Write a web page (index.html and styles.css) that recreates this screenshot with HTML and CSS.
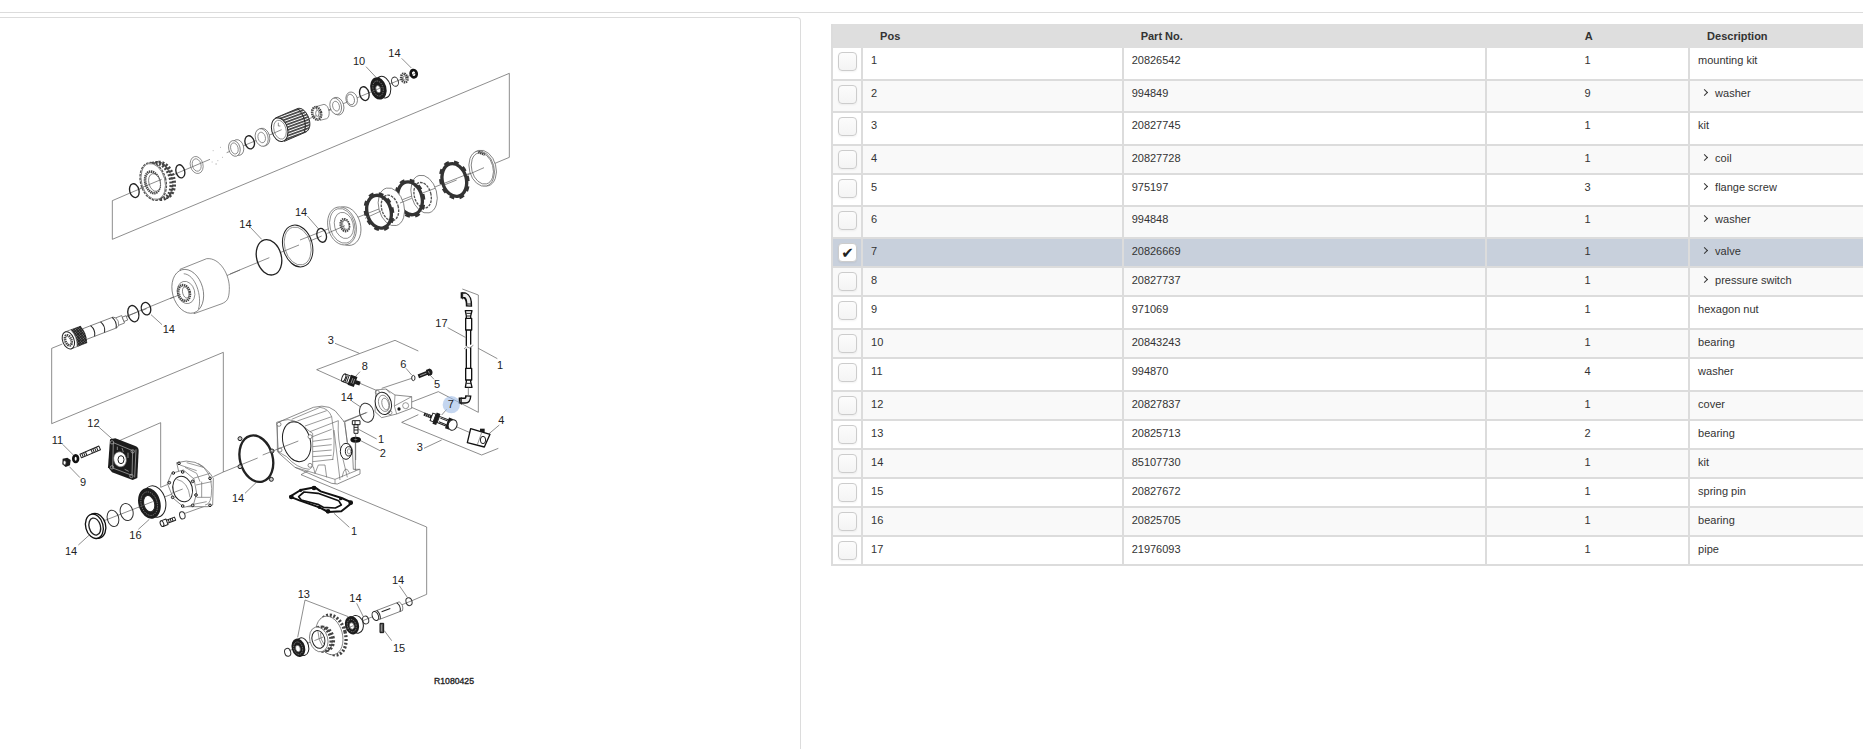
FILE: index.html
```
<!DOCTYPE html>
<html lang="en">
  <head>
    <meta charset="utf-8">
    <title>R1080425</title>
    <link rel="stylesheet" href="styles.css">
  </head>
  <body>
    <div class="topbar"></div>
    <div class="content">
      <div class="drawing">
        <svg class="diagram" viewBox="0 54 1680 2100" role="img" aria-label="Exploded view">
          <defs>
            <pattern id="spline" width="20" height="8" patternUnits="userSpaceOnUse" patternTransform="rotate(-20)">
              <rect width="20" height="8" fill="#fff"/>
              <rect width="20" height="5" fill="#444"/>
            </pattern>
            <pattern id="knurl" width="6" height="6" patternUnits="userSpaceOnUse" patternTransform="rotate(-20)">
              <rect width="6" height="6" fill="#222"/>
              <rect width="3" height="2" fill="#aaa"/>
            </pattern>
          </defs>

          <!-- upper shaft, left half -->
          <g transform="translate(300 90)">
            <path class="line" d="M88 490 37 512V628L1228 130V382L1185 400M88 490 330 388M380 368 720 228"/>
            <ellipse class="ring" cx="103" cy="482" rx="14" ry="21" transform="rotate(-15 103 482)"/>
            <g transform="rotate(-15 165 455)">
              <ellipse class="teeth" cx="187" cy="456" rx="34" ry="53"/>
              <ellipse class="teeth" cx="177" cy="456" rx="36" ry="55"/>
              <ellipse class="rim" cx="160" cy="453" rx="38" ry="58"/>
              <ellipse class="part" cx="160" cy="453" rx="35" ry="55" stroke="none"/>
              <ellipse class="bore" cx="157" cy="455" rx="21" ry="33"/>
              <ellipse class="part" cx="163" cy="457" rx="17" ry="27"/>
            </g>
            <path class="line" d="M120 475 185 448"/>
            <ellipse class="ring" cx="241" cy="424" rx="13" ry="20" transform="rotate(-15 241 424)"/>
            <g transform="rotate(-15 290 405)">
              <ellipse class="thin" cx="290" cy="405" rx="19" ry="26"/>
              <ellipse class="thin" cx="290" cy="405" rx="13" ry="19"/>
            </g>
            <path class="speck" d="M338 362h3M360 352h3M366 382h3M346 402h5M352 392h3M335 396h3"/>
            <g transform="rotate(-15 408 354)">
              <ellipse class="part" cx="414" cy="354" rx="17" ry="24"/>
              <ellipse class="part" cx="403" cy="354" rx="17" ry="24"/>
              <ellipse class="thin" cx="403" cy="354" rx="11" ry="17"/>
            </g>
            <ellipse class="ring" cx="449" cy="337" rx="14" ry="20" transform="rotate(-15 449 337)"/>
            <g transform="rotate(-15 487 322)">
              <ellipse class="part" cx="490" cy="322" rx="19" ry="27"/>
              <ellipse class="part" cx="485" cy="322" rx="19" ry="27"/>
              <ellipse class="thin" cx="485" cy="322" rx="11" ry="16"/>
            </g>
            <path class="splined" d="M526 264 592 236C618 226 646 290 618 306L553 334Z"/>
            <path class="dark" d="M592 236C612 250 622 286 612 308"/>
            <ellipse class="part dark" cx="539" cy="299" rx="24" ry="36" transform="rotate(-15 539 299)"/>
            <ellipse class="thin" cx="540" cy="299" rx="18" ry="29" transform="rotate(-15 540 299)"/>
            <path class="line" d="M515 312 545 299M535 278v10h6"/>
            <path class="part" d="M648 230 672 223C690 226 692 262 680 266L660 271Z"/>
            <ellipse class="bore" cx="650" cy="250" rx="13" ry="19" transform="rotate(-15 650 250)"/>
            <ellipse class="part" cx="652" cy="250" rx="5" ry="9"/>
          </g>

          <!-- upper shaft, right half -->
          <g transform="translate(930 90)">
            <path class="line" d="M55 240 320 128M-30 630 555 400M168 110 198 142M275 85 304 114"/>
            <g transform="rotate(-15 80 228)">
              <ellipse class="part" cx="82" cy="229" rx="19" ry="27"/>
              <ellipse class="part" cx="77" cy="228" rx="17" ry="25"/>
              <ellipse class="thin" cx="78" cy="228" rx="10" ry="15"/>
            </g>
            <g transform="rotate(-15 124 208)">
              <ellipse class="part" cx="125" cy="208" rx="17" ry="22"/>
              <ellipse class="part" cx="122" cy="208" rx="11" ry="16"/>
            </g>
            <ellipse class="ring" cx="163" cy="191" rx="14" ry="21" transform="rotate(-15 163 191)"/>
            <g transform="rotate(-15 210 174)">
              <ellipse class="part dark" cx="220" cy="174" rx="22" ry="33"/>
              <ellipse class="solid" cx="205" cy="174" rx="24" ry="34"/>
              <ellipse class="race" cx="204" cy="174" rx="15" ry="23"/>
              <ellipse class="part" cx="204" cy="176" rx="7" ry="11"/>
            </g>
            <path class="line" d="M183 186 216 172"/>
            <ellipse class="ring fine" cx="255" cy="155" rx="10" ry="14" transform="rotate(-15 255 155)"/>
            <ellipse class="bore" cx="283" cy="144" rx="9" ry="13" transform="rotate(-15 283 144)"/>
            <ellipse class="part" cx="283" cy="144" rx="4" ry="6"/>
            <ellipse class="seal" cx="311" cy="131" rx="9" ry="11" transform="rotate(-15 311 131)"/>

            <g transform="rotate(-15 518 415)">
              <ellipse class="part" cx="520" cy="415" rx="38" ry="55"/>
              <ellipse class="part" cx="515" cy="415" rx="37" ry="54"/>
              <ellipse class="part" cx="517" cy="415" rx="32" ry="48"/>
            </g>
            <path class="bore" d="M505 366 524 374"/>
            <g transform="rotate(-15 433 450)">
              <ellipse class="lugs" cx="433" cy="450" rx="39" ry="54"/>
              <ellipse class="clutch" cx="433" cy="450" rx="36" ry="50"/>
            </g>
            <g transform="rotate(-15 340 492)">
              <ellipse class="part" cx="342" cy="493" rx="38" ry="58"/>
              <ellipse class="rim" cx="337" cy="495" rx="25" ry="39"/>
            </g>
            <g transform="rotate(-15 300 505)">
              <ellipse class="lugs" cx="300" cy="505" rx="39" ry="54"/>
              <ellipse class="clutch" cx="300" cy="505" rx="36" ry="50"/>
            </g>
            <g transform="rotate(-15 242 530)">
              <ellipse class="part" cx="244" cy="531" rx="38" ry="58"/>
              <ellipse class="rim" cx="239" cy="533" rx="25" ry="39"/>
            </g>
            <g transform="rotate(-15 207 545)">
              <ellipse class="lugs" cx="207" cy="545" rx="39" ry="54"/>
              <ellipse class="clutch" cx="207" cy="545" rx="36" ry="50"/>
            </g>
            <path class="line" d="M165 565 213 543M270 519 305 505M335 490 375 475M400 466 440 450M470 436 522 413"/>
            <g transform="rotate(-15 103 587)">
              <ellipse class="part" cx="109" cy="590" rx="42" ry="59"/>
              <ellipse class="part" cx="96" cy="586" rx="42" ry="58"/>
              <ellipse class="thin" cx="97" cy="586" rx="37" ry="53"/>
              <ellipse class="thin" cx="102" cy="586" rx="28" ry="40"/>
              <ellipse class="bore" cx="105" cy="586" rx="12" ry="18"/>
              <ellipse class="part" cx="108" cy="586" rx="9" ry="14"/>
            </g>
            <path class="line" d="M52 610 105 587"/>
          </g>

          <!-- seal rings -->
          <g transform="translate(690 540)">
            <path class="line" d="M0 282 118 233M150 218 207 195M240 183 275 168M62 143 95 178M232 108 266 147"/>
            <ellipse class="ring" cx="275" cy="166" rx="14" ry="21" transform="rotate(-15 275 166)"/>
            <g transform="rotate(-15 203 198)">
              <ellipse class="thin dark" cx="203" cy="198" rx="44" ry="64"/>
              <ellipse class="thin" cx="203" cy="198" rx="39" ry="58"/>
            </g>
            <ellipse class="ring" cx="117" cy="232" rx="37" ry="54" transform="rotate(-15 117 232)"/>
          </g>

          <!-- drum and input shaft -->
          <g transform="translate(90 600)">
            <path class="line" d="M97 432 65 445V671L580 457V816M275 355 445 285M590 227 630 210M363 344 396 374"/>
            <path class="part" d="M450 208 530 176C570 172 600 225 598 268 597 300 590 304 576 311L492 341Z"/>
            <g transform="rotate(-15 473 273)">
              <ellipse class="part" cx="473" cy="274" rx="46" ry="67"/>
              <path class="thin" d="M475 220C508 230 512 300 490 334"/>
              <ellipse class="thin" cx="467" cy="276" rx="26" ry="34"/>
              <ellipse class="bore" cx="461" cy="276" rx="17" ry="24"/>
              <ellipse class="part" cx="466" cy="276" rx="9" ry="17"/>
            </g>
            <path class="line" d="M420 296 452 283"/>
            <ellipse class="ring" cx="348" cy="326" rx="14" ry="19" transform="rotate(-15 348 326)"/>
            <ellipse class="ring" cx="310" cy="341" rx="16" ry="25" transform="rotate(-15 310 341)"/>
            <path class="line" d="M275 355 320 337M335 332 350 326"/>
            <g transform="translate(115 421) rotate(-21)">
              <path class="part" d="M50-17H150L157-12H176V12H157L150 17H50Z"/>
              <path class="part" d="M176-7H188V7H176Z"/>
              <path class="dark" d="M78-17Q88 0 78 17M110-17Q120 0 110 17M147-17Q157 0 147 17"/>
              <path class="thin" d="M157-12Q164 0 157 12"/>
              <path class="knurled" d="M18-28H50Q60 0 50 28H18Z"/>
              <path class="part" d="M0-27H18Q30 0 18 27H0Z"/>
              <ellipse class="part dark" cx="0" cy="0" rx="17" ry="27"/>
              <ellipse class="bore" cx="0" cy="0" rx="9" ry="16"/>
            </g>
          </g>

          <!-- valve, switch and pipe -->
          <g transform="translate(900 840)">
            <path class="line" d="M130 305 50 269 285 181 355 213M105 190 178 220M180 310 320 370M245 325 335 295M335 366 415 335 535 397V45L487 27M535 205 592 236M443 143 496 172M180 275 166 290M318 265 335 285M402 298 390 285M155 363 182 381M330 380 510 458M355 404 305 427 545 525 595 505M372 505 425 480M598 435 566 462M440 388 425 405"/>
            <g transform="translate(150 300) rotate(20)">
              <path class="part dark" d="M-20-12H0V12H-20Z"/>
              <ellipse class="part dark" cx="-20" cy="0" rx="5" ry="12"/>
              <path class="solid" d="M-2-16H18V16H-2ZM18-6H32V6H18Z"/>
              <path class="shine" d="M6-8V8M12-8V8"/>
              <path class="dark" d="M-12-10V10M-7-10V10"/>
            </g>
            <ellipse class="ring fine" cx="340" cy="294" rx="5" ry="8"/>
            <g transform="translate(355 289) rotate(-21)">
              <path class="solid" d="M0-6H28V6H0ZM28-10H40Q50 0 40 10H28Z"/>
              <path class="shine" d="M6 0H26M34-4V4"/>
            </g>
            <ellipse class="ring fine" cx="200" cy="398" rx="21" ry="29" transform="rotate(-15 200 398)"/>
            <path class="line" d="M135 425 202 397"/>
            <g>
              <path class="part" d="M228 330 258 327 285 345 335 350V385L290 402 245 413 225 395Z"/>
              <path class="thin" d="M285 345 283 378 290 402M283 378 335 350M258 327 270 340"/>
              <ellipse class="part dark" cx="250" cy="370" rx="24" ry="34" transform="rotate(-15 250 370)"/>
              <ellipse class="thin" cx="252" cy="370" rx="16" ry="25" transform="rotate(-15 252 370)"/>
              <ellipse class="thin" cx="256" cy="372" rx="10" ry="18" transform="rotate(-15 256 372)"/>
              <circle class="thin" cx="232" cy="337" r="6"/>
              <circle class="thin" cx="270" cy="398" r="6"/>
              <circle class="solid" cx="297" cy="387" r="5"/>
              <circle class="thin" cx="317" cy="377" r="9"/>
            </g>
            <g transform="translate(372 402) rotate(21)">
              <path class="solid" d="M0-5H26V5H0Z"/>
              <path class="shine" d="M6-4V4M12-4V4M18-4V4"/>
              <path class="part dark" d="M24-12H34V12H24Z"/>
              <path class="solid" d="M34-18H46V18H34Z"/>
              <path class="part dark" d="M46-10H76V10H46Z"/>
              <path class="dark" d="M50-6H74M50 6H74"/>
              <path class="solid" d="M74-17H88V17H74Z"/>
              <ellipse class="part dark" cx="92" cy="0" rx="13" ry="16"/>
            </g>
            <path class="part outline" d="M512 446 570 463 553 501 502 488Z"/>
            <path class="thin" d="M545 458 532 494"/>
            <ellipse class="thin dark" cx="549" cy="480" rx="8" ry="11"/>
            <path class="solid" d="M540 446H554V456H540Z"/>
            <path class="elbow" d="M482 46H494Q508 52 507 80"/>
            <path class="elbow-core" d="M488 46H496Q508 52 507 76"/>
            <path class="elbow" d="M476 362H496Q504 362 505 346"/>
            <path class="elbow-core" d="M482 362H496Q504 362 505 350"/>
            <path class="dark" d="M488 36V58M498 72H516M484 352V374"/>
            <path class="part outline" d="M496 92H516L512 108V305L516 322H496L499 305V108Z"/>
            <path class="part outline" d="M497 115H515V150H497ZM497 265H515V300H497Z"/>
            <path class="dark" d="M499 108H512M499 100H514M499 310H513"/>
            <path class="gap" d="M490 205 522 195"/>
            <path class="line" d="M492 207 500 200 508 204 520 196M505 322V345"/>
            <path class="part dark" d="M157 422H180V434H157ZM162 434H174V460H162Z"/>
            <path class="dark" d="M162 442H174M162 450H174M165 423V434"/>
            <ellipse class="seal" cx="167" cy="479" rx="12" ry="5"/>
            <path class="line" d="M174 447 230 477M182 482 240 512M167 460V540"/>
            <circle class="spot" cx="454" cy="374" r="26"/>
          </g>

          <!-- cover, bearing and flange -->
          <g transform="translate(90 1230)">
            <path class="line" d="M243 103 392 38V232L425 218M205 50 250 90M98 103 130 135M118 170 150 203M580 186 550 200M580 186 683 144M325 358 358 328M145 405 178 375M645 250 678 218M215 335 475 233M465 310 540 283"/>
            <path class="solid" d="M240 88 256 85 316 108Q326 112 326 122L322 204 308 210 246 187 234 172Z"/>
            <path class="shine" d="M250 98 308 122 306 196 248 174ZM318 118 314 202M262 110V120M276 114 280 126M294 128V144M256 148 262 164M284 178 296 184"/>
            <ellipse class="part" cx="270" cy="148" rx="19" ry="23" transform="rotate(-15 270 148)"/>
            <ellipse class="part dark" cx="273" cy="149" rx="9" ry="12"/>
            <circle class="shine" cx="246" cy="97" r="5"/>
            <circle class="shine" cx="308" cy="124" r="5"/>
            <circle class="shine" cx="246" cy="172" r="5"/>
            <circle class="shine" cx="304" cy="198" r="5"/>
            <path class="solid" d="M98 146 112 143 122 150 120 166 107 171 97 163Z"/>
            <ellipse class="part" cx="104" cy="158" rx="4" ry="6"/>
            <ellipse class="seal" cx="137" cy="146" rx="7" ry="10"/>
            <g transform="translate(152 138) rotate(-23)">
              <path class="part dark" d="M0-6H62V6H0Z"/>
              <path class="dark" d="M6-6V6M12-6V6M18-6V6M36-6V6M42-6V6M48-6V6M54-6V6"/>
            </g>
            <g transform="rotate(-15 365 278)">
              <ellipse class="part dark" cx="374" cy="277" rx="33" ry="48"/>
              <ellipse class="solid" cx="358" cy="278" rx="33" ry="47"/>
              <ellipse class="race" cx="357" cy="279" rx="24" ry="36"/>
              <ellipse class="part dark" cx="357" cy="279" rx="16" ry="25"/>
            </g>
            <path class="line" d="M325 292 368 275"/>
            <ellipse class="ring fine" cx="290" cy="306" rx="19" ry="26" transform="rotate(-15 290 306)"/>
            <ellipse class="ring fine" cx="249" cy="325" rx="17" ry="25" transform="rotate(-15 249 325)"/>
            <g transform="rotate(-15 197 348)">
              <ellipse class="part outline" cx="199" cy="348" rx="28" ry="38"/>
              <ellipse class="part outline" cx="193" cy="348" rx="26" ry="37"/>
              <ellipse class="ring" cx="194" cy="349" rx="17" ry="26"/>
            </g>
            <path class="part" d="M440 158Q500 140 540 190L550 205 548 285 535 290 470 290Z"/>
            <path class="thin" d="M450 165 500 182M470 158 520 172M490 205 540 190M498 225 545 215M500 262 540 262M480 285 530 275M505 160Q545 185 545 235T525 285M465 172 500 190 510 215M515 215V262"/>
            <path class="part" d="M425 190 460 180 492 207 500 250 490 285 462 292 430 265 412 220Z"/>
            <ellipse class="part dark" cx="458" cy="237" rx="29" ry="39" transform="rotate(-15 458 237)"/>
            <path class="thin" d="M440 208Q475 215 480 262"/>
            <g class="bolts">
              <circle cx="430" cy="189" r="4"/>
              <circle cx="458" cy="186" r="4"/>
              <circle cx="488" cy="214" r="4"/>
              <circle cx="498" cy="255" r="4"/>
              <circle cx="488" cy="286" r="4"/>
              <circle cx="458" cy="288" r="4"/>
              <circle cx="428" cy="262" r="4"/>
              <circle cx="418" cy="218" r="4"/>
              <circle cx="540" cy="205" r="4"/>
              <circle cx="540" cy="286" r="4"/>
              <circle cx="447" cy="160" r="4"/>
            </g>
            <path class="line" d="M425 250 458 237"/>
            <g transform="translate(396 341) rotate(-21)">
              <path class="part dark" d="M0-9H16V9H0ZM16-5H42V5H16Z"/>
              <path class="dark" d="M22-5V5M28-5V5M34-5V5"/>
              <ellipse class="part dark" cx="0" cy="0" rx="5" ry="9"/>
            </g>
            <ellipse class="ring fine" cx="457" cy="316" rx="8" ry="11" transform="rotate(-15 457 316)"/>
            <ellipse class="gasket" cx="679" cy="146" rx="49" ry="71" transform="rotate(-15 679 146)"/>
            <circle class="bolt" cx="630" cy="86" r="6"/>
            <circle class="bolt" cx="726" cy="123" r="6"/>
            <circle class="bolt" cx="630" cy="170" r="6"/>
            <circle class="bolt" cx="724" cy="208" r="6"/>
          </g>

          <!-- housing -->
          <g transform="translate(780 1170)">
            <path class="part" d="M50 97 66 92 160 52Q215 38 240 80L254 97 262 158Q280 168 278 195L280 238 300 238V252L232 282 215 280 105 232 55 188Z"/>
            <path class="thin" d="M66 92Q100 78 150 125L158 130V230L148 238Q110 235 80 200L52 184V100Z"/>
            <ellipse class="part dark" cx="110" cy="155" rx="41" ry="61" transform="rotate(-15 110 155)"/>
            <path class="thin" d="M78 108Q92 92 112 96M95 88 180 52M112 93 200 62M135 108 215 80M150 125 235 92M158 140 215 118M158 154 215 146M158 170 215 164M158 185 215 180M158 200 215 196M158 215 220 208M215 80Q228 160 218 210M235 92Q232 150 246 195L262 262M222 120 240 270M160 230 165 250 175 225H195L200 262M105 232 225 268 298 238M225 268V282M246 262Q255 220 268 248M254 97 262 158M180 52Q205 55 215 80"/>
            <ellipse class="part dark" cx="258" cy="184" rx="17" ry="24"/>
            <ellipse class="thin dark" cx="266" cy="184" rx="10" ry="14"/>
            <ellipse class="thin" cx="267" cy="184" rx="5" ry="8"/>
            <circle class="part" cx="57" cy="103" r="6"/>
            <circle class="part" cx="150" cy="140" r="6"/>
            <circle class="part" cx="60" cy="180" r="6"/>
            <circle class="part" cx="150" cy="226" r="6"/>
            <path class="line" d="M8 195 115 153M250 95 318 68M286 158V242M145 242 123 254 500 411V613L456 632M222 370 268 412"/>
            <path class="plate" d="M90 320 122 300 165 292 182 304 245 324 276 338 244 364 205 366 178 352 120 332Z"/>
            <path class="plate-hole" d="M116 320 132 306 174 310 236 332 244 345 226 354 190 352 176 344 124 330Z"/>
            <g class="lug">
              <circle cx="94" cy="321" r="7"/>
              <circle cx="162" cy="294" r="7"/>
              <circle cx="272" cy="338" r="7"/>
              <circle cx="204" cy="364" r="7"/>
              <circle cx="122" cy="301" r="5"/>
              <circle cx="242" cy="326" r="5"/>
              <circle cx="178" cy="352" r="5"/>
            </g>
          </g>

          <!-- idler gear -->
          <g transform="translate(780 1680)">
            <path class="line" d="M135 120 113 232M135 120 265 170M88 272 456 122M290 130 310 170M418 77 442 112M373 212 395 242"/>
            <ellipse class="ring fine" cx="83" cy="277" rx="9" ry="12" transform="rotate(-15 83 277)"/>
            <g transform="rotate(-15 120 262)">
              <ellipse class="part dark" cx="128" cy="262" rx="18" ry="27"/>
              <ellipse class="solid" cx="115" cy="262" rx="20" ry="28"/>
              <ellipse class="race" cx="114" cy="263" rx="13" ry="19"/>
              <ellipse class="part" cx="113" cy="264" rx="7" ry="10"/>
            </g>
            <g transform="rotate(-15 210 225)">
              <ellipse class="teeth wide" cx="218" cy="227" rx="38" ry="61"/>
              <ellipse class="part" cx="208" cy="226" rx="39" ry="59"/>
              <ellipse class="teeth wide" cx="192" cy="232" rx="25" ry="35"/>
              <ellipse class="teeth wide" cx="184" cy="231" rx="26" ry="37"/>
              <ellipse class="part" cx="174" cy="229" rx="27" ry="38"/>
              <ellipse class="thin dark" cx="173" cy="229" rx="19" ry="27"/>
              <path class="thin" d="M178 204Q172 230 180 254M184 212Q178 230 185 246"/>
            </g>
            <path class="line" d="M163 242 190 231"/>
            <g transform="rotate(-15 282 195)">
              <ellipse class="part dark" cx="290" cy="195" rx="20" ry="27"/>
              <ellipse class="solid" cx="276" cy="194" rx="21" ry="28"/>
              <ellipse class="race" cx="275" cy="195" rx="13" ry="19"/>
              <ellipse class="part" cx="275" cy="196" rx="7" ry="10"/>
            </g>
            <path class="line" d="M258 206 280 197"/>
            <ellipse class="ring fine" cx="317" cy="180" rx="9" ry="12" transform="rotate(-15 317 180)"/>
            <g transform="translate(346 168) rotate(-21)">
              <path class="part" d="M0-14H82Q92 0 82 14H0Z"/>
              <path class="dark" d="M74-14Q84 0 74 14M10-14Q18 0 10 14M22-5H50"/>
              <ellipse class="part dark" cx="0" cy="0" rx="9" ry="14"/>
            </g>
            <ellipse class="ring fine" cx="447" cy="125" rx="9" ry="12" transform="rotate(-15 447 125)"/>
            <path class="pin" d="M360 190H371V218H360Z"/>
            <path class="shine" d="M364 194V214"/>
          </g>

          <g class="callouts">
            <text x="1059" y="195">10</text>
            <text x="1165" y="172">14</text>
            <text x="885" y="649">14</text>
            <text x="718" y="684">14</text>
            <text x="488" y="1000">14</text>
            <text x="983" y="1032">3</text>
            <text x="1085" y="1111">8</text>
            <text x="1201" y="1103">6</text>
            <text x="1302" y="1164">5</text>
            <text x="1306" y="982">17</text>
            <text x="1491" y="1106">1</text>
            <text x="1022" y="1202">14</text>
            <text x="1343" y="1225">7</text>
            <text x="1495" y="1272">4</text>
            <text x="1250" y="1353">3</text>
            <text x="1134" y="1329">1</text>
            <text x="1139" y="1371">2</text>
            <text x="262" y="1282">12</text>
            <text x="155" y="1333">11</text>
            <text x="240" y="1457">9</text>
            <text x="388" y="1617">16</text>
            <text x="195" y="1665">14</text>
            <text x="696" y="1505">14</text>
            <text x="1053" y="1604">1</text>
            <text x="893" y="1794">13</text>
            <text x="1048" y="1805">14</text>
            <text x="1176" y="1752">14</text>
            <text x="1179" y="1956">15</text>
            <text class="number" x="1302" y="2051">R1080425</text>
          </g>
        </svg>
      </div>

      <div class="parts">
        <table>
          <colgroup>
            <col class="col-check">
            <col class="col-pos">
            <col class="col-part">
            <col class="col-amount">
            <col>
          </colgroup>
          <thead>
            <tr><th></th><th>Pos</th><th>Part No.</th><th class="amount">A</th><th>Description</th></tr>
          </thead>
          <tbody>
            <tr class="tall">
              <td class="check"><input type="checkbox" id="p1"></td>
              <td><label for="p1">1</label></td><td>20826542</td><td class="amount">1</td><td>mounting kit</td>
            </tr>
            <tr class="tall-sub">
              <td class="check"><input type="checkbox" id="p2"></td>
              <td><label for="p2">2</label></td><td>994849</td><td class="amount">9</td><td class="sub">washer</td>
            </tr>
            <tr class="tall">
              <td class="check"><input type="checkbox" id="p3"></td>
              <td><label for="p3">3</label></td><td>20827745</td><td class="amount">1</td><td>kit</td>
            </tr>
            <tr>
              <td class="check"><input type="checkbox" id="p4"></td>
              <td><label for="p4">4</label></td><td>20827728</td><td class="amount">1</td><td class="sub">coil</td>
            </tr>
            <tr class="tall-sub">
              <td class="check"><input type="checkbox" id="p5"></td>
              <td><label for="p5">5</label></td><td>975197</td><td class="amount">3</td><td class="sub">flange screw</td>
            </tr>
            <tr class="tall-sub">
              <td class="check"><input type="checkbox" id="p6"></td>
              <td><label for="p6">6</label></td><td>994848</td><td class="amount">1</td><td class="sub">washer</td>
            </tr>
            <tr class="selected">
              <td class="check"><input type="checkbox" id="p7" checked></td>
              <td><label for="p7">7</label></td><td>20826669</td><td class="amount">1</td><td class="sub">valve</td>
            </tr>
            <tr>
              <td class="check"><input type="checkbox" id="p8"></td>
              <td><label for="p8">8</label></td><td>20827737</td><td class="amount">1</td><td class="sub">pressure switch</td>
            </tr>
            <tr class="tall">
              <td class="check"><input type="checkbox" id="p9"></td>
              <td><label for="p9">9</label></td><td>971069</td><td class="amount">1</td><td>hexagon nut</td>
            </tr>
            <tr>
              <td class="check"><input type="checkbox" id="p10"></td>
              <td><label for="p10">10</label></td><td>20843243</td><td class="amount">1</td><td>bearing</td>
            </tr>
            <tr class="tall">
              <td class="check"><input type="checkbox" id="p11"></td>
              <td><label for="p11">11</label></td><td>994870</td><td class="amount">4</td><td>washer</td>
            </tr>
            <tr>
              <td class="check"><input type="checkbox" id="p12"></td>
              <td><label for="p12">12</label></td><td>20827837</td><td class="amount">1</td><td>cover</td>
            </tr>
            <tr>
              <td class="check"><input type="checkbox" id="p13"></td>
              <td><label for="p13">13</label></td><td>20825713</td><td class="amount">2</td><td>bearing</td>
            </tr>
            <tr>
              <td class="check"><input type="checkbox" id="p14"></td>
              <td><label for="p14">14</label></td><td>85107730</td><td class="amount">1</td><td>kit</td>
            </tr>
            <tr>
              <td class="check"><input type="checkbox" id="p15"></td>
              <td><label for="p15">15</label></td><td>20827672</td><td class="amount">1</td><td>spring pin</td>
            </tr>
            <tr>
              <td class="check"><input type="checkbox" id="p16"></td>
              <td><label for="p16">16</label></td><td>20825705</td><td class="amount">1</td><td>bearing</td>
            </tr>
            <tr>
              <td class="check"><input type="checkbox" id="p17"></td>
              <td><label for="p17">17</label></td><td>21976093</td><td class="amount">1</td><td>pipe</td>
            </tr>
          </tbody>
        </table>
      </div>
    </div>
  </body>
</html>
```

FILE: styles.css
```
* {
  box-sizing: border-box;
}
body {
  margin: 0;
  min-height: 100vh;
  display: flex;
  flex-direction: column;
  background: #fff;
  color: #333;
  font-family: "Liberation Sans", Arial, sans-serif;
  font-size: 11px;
  line-height: 14px;
}
.topbar {
  height: 13px;
  border-bottom: 1px solid #dcdcdc;
}
.content {
  flex: 1;
  display: flex;
  gap: 30px;
  padding-top: 4px;
}
.drawing {
  flex: 0 0 43%;
  border: 1px solid #dcdcdc;
  border-width: 1px 1px 0 0;
  border-radius: 0 4px 0 0;
}
.parts {
  flex: 1;
  padding-top: 7px;
}

/* parts list */
table {
  width: 100%;
  table-layout: fixed;
  border-collapse: separate;
  border-spacing: 0;
  border-left: 2px solid #dcdcdc;
}
.col-check {
  width: 30px;
}
.col-pos {
  width: 25.3%;
}
.col-part {
  width: 35.3%;
}
.col-amount {
  width: 19.7%;
}
th {
  height: 24px;
  padding: 0 17px;
  background: #dedede;
  text-align: left;
}
td {
  height: 29px;
  padding: 5px 8px 0;
  border: 2px solid #dcdcdc;
  border-width: 0 2px 2px 0;
  vertical-align: top;
}
td:last-child {
  border-right: 0;
}
tr:nth-child(even) td {
  background: #f9f9f9;
}
tr.selected td {
  background: #c8d0dc;
}
.tall td {
  height: 33px;
}
.tall-sub td {
  height: 32px;
}
.check {
  padding: 4px 0 0 5px;
}
th.amount, td.amount {
  padding-left: 0;
  padding-right: 0;
  text-align: center;
}
.sub::before {
  content: "";
  display: inline-block;
  width: 4px;
  height: 4px;
  margin: 0 8px 2px 4px;
  border: 1px solid #333;
  border-width: 1px 1px 0 0;
  transform: rotate(45deg);
}
input[type=checkbox] {
  appearance: none;
  display: block;
  width: 19px;
  height: 19px;
  margin: 0;
  border: 1px solid #ccc;
  border-radius: 4px;
  background: linear-gradient(#fcfcfc, #f4f4f4);
  box-shadow: 0 1px 2px rgba(0, 0, 0, .05);
}
input[type=checkbox]:checked {
  background: #fff;
}
input[type=checkbox]:checked::before {
  content: "\2714";
  display: block;
  font: 15px/19px "DejaVu Sans", sans-serif;
  text-align: center;
  color: #222;
}

/* exploded view, three drawing units to a pixel */
.diagram {
  display: block;
  width: 560px;
  max-width: 100%;
  fill: none;
  stroke-width: 3;
  stroke-linejoin: round;
}
.line {
  stroke: #555;
  stroke-width: 2;
}
.part {
  fill: #fff;
  stroke: #555;
  stroke-width: 2;
}
.thin {
  stroke: #666;
  stroke-width: 2;
}
.dark {
  stroke: #222;
  stroke-width: 3;
}
.outline {
  stroke: #111;
  stroke-width: 4;
}
.ring {
  stroke: #222;
  stroke-width: 4;
}
.ring.fine {
  stroke: #333;
  stroke-width: 3;
}
.rim {
  stroke: #555;
  stroke-width: 4;
  stroke-dasharray: 8 3;
}
.teeth {
  fill: #fff;
  stroke: #444;
  stroke-width: 12;
  stroke-dasharray: 6 5;
}
.teeth.wide {
  stroke-width: 10;
  stroke-dasharray: 6 5;
}
.bore {
  stroke: #444;
  stroke-width: 8;
  stroke-dasharray: 4 2;
}
.splined {
  fill: url(#spline);
  stroke: #333;
}
.knurled {
  fill: url(#knurl);
}
.solid {
  fill: #1c1c1c;
}
.race {
  stroke: #999;
  stroke-width: 2;
  stroke-dasharray: 4 3;
}
.seal {
  stroke: #111;
  stroke-width: 8;
}
.clutch {
  stroke: #333;
  stroke-width: 10;
}
.lugs {
  stroke: #333;
  stroke-width: 12;
  stroke-dasharray: 14 15;
}
.shine {
  stroke: #bbb;
  stroke-width: 2;
}
.speck {
  stroke: #bbb;
  stroke-width: 3;
}
.elbow {
  stroke: #111;
  stroke-width: 19;
}
.elbow-core {
  stroke: #eee;
  stroke-width: 10;
}
.gap {
  stroke: #fff;
  stroke-width: 8;
}
.bolts, .bolt {
  fill: #ccc;
  stroke: #222;
  stroke-width: 3;
}
.gasket {
  stroke: #222;
  stroke-width: 7;
}
.plate {
  fill: #fff;
  stroke: #111;
  stroke-width: 6;
}
.plate-hole {
  stroke: #111;
  stroke-width: 5;
}
.lug {
  fill: #111;
}
.pin {
  fill: #555;
  stroke: #111;
}
.spot {
  fill: #9dbbe6;
  opacity: .6;
}
.callouts {
  fill: #222;
  font-size: 33px;
}
.callouts .number {
  font-size: 26px;
  stroke: #222;
  stroke-width: 1;
}
```
